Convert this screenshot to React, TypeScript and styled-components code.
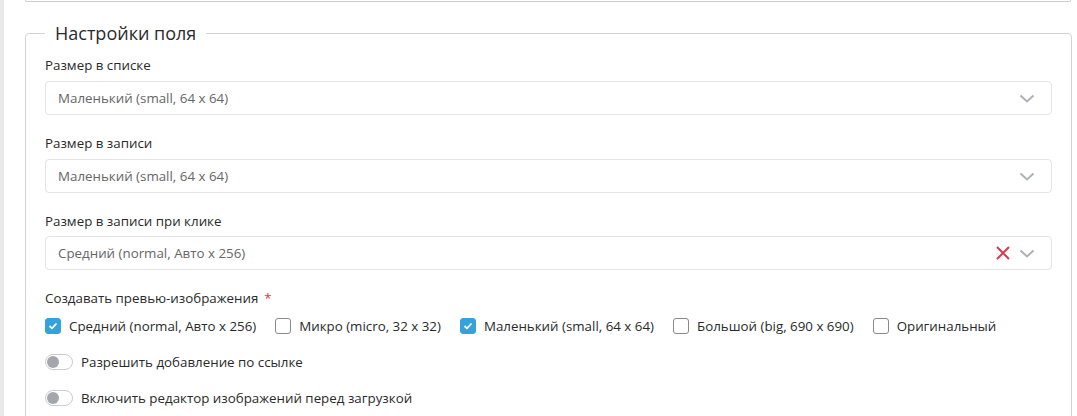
import React from "react";
import styled, { createGlobalStyle } from "styled-components";

const Global = createGlobalStyle`
  html, body { margin: 0; padding: 0; background: #fff; }
  body { font-family: "Open Sans", "Noto Sans", sans-serif; color: #212529; }
  * { box-sizing: border-box; }
`;

const Page = styled.div`
  display: flex;
  min-height: 416px;
  width: 1077px;
  overflow: hidden;
`;

const Strip = styled.div`
  width: 4px;
  flex: none;
  background: #e9e9e9;
`;

const Main = styled.div`
  flex: 1;
  padding: 0 5px 0 21px;
  display: flex;
  flex-direction: column;
`;

const TopCard = styled.div`
  height: 2px;
  margin-right: 1px;
  border: 1px solid #cfcfcf;
  border-top: none;
  border-radius: 0 0 4px 4px;
`;

const Fieldset = styled.fieldset`
  margin: 18px 0 0 0;
  padding: 0 19px 20px 19px;
  border: 1px solid #d4d4d4;
  border-radius: 4px;
  min-width: 0;
`;

const Legend = styled.legend`
  font-size: 18px;
  line-height: 26px;
  padding: 0 10px;
  color: #2b2b2b;
  font-weight: 400;
`;

const Group = styled.div<{ $mt?: number }>`
  margin-top: ${(p) => p.$mt ?? 18}px;
  display: flex;
  flex-direction: column;
`;

const Label = styled.div<{ $mb?: number }>`
  font-size: 13.33px;
  line-height: 20px;
  color: #2a2a2a;
  margin-bottom: ${(p) => p.$mb ?? 6}px;
`;

const Req = styled.span`
  color: #dc3545;
  margin-left: 6px;
`;

const Select = styled.div`
  height: 34px;
  border: 1px solid #e4e4e4;
  border-radius: 4px;
  display: flex;
  align-items: center;
  padding: 0 16px 0 12px;
  font-size: 13.33px;
  color: #666;
`;

const Value = styled.span`
  flex: 1;
`;

const Icons = styled.div`
  display: flex;
  align-items: center;
  gap: 9px;
`;

const CheckRow = styled.div`
  display: flex;
  align-items: center;
  gap: 19px;
  margin-top: 9px;
`;

const CheckItem = styled.label`
  display: flex;
  align-items: center;
  gap: 8px;
  font-size: 13.33px;
  line-height: 18px;
  color: #2a2a2a;
`;

const Box = styled.span<{ $on?: boolean }>`
  width: 16px;
  height: 16px;
  border-radius: 3px;
  display: inline-flex;
  align-items: center;
  justify-content: center;
  background: ${(p) => (p.$on ? "#35a2dc" : "#fff")};
  border: 1px solid ${(p) => (p.$on ? "#35a2dc" : "#8a8a8a")};
`;

const ToggleRow = styled.label`
  display: flex;
  align-items: center;
  gap: 8px;
  font-size: 13.33px;
  line-height: 18px;
  color: #2a2a2a;
  margin-top: 18px;
`;

const Toggle = styled.span`
  width: 28px;
  height: 16px;
  border: 1px solid #c9ccd0;
  border-radius: 8px;
  display: inline-flex;
  align-items: center;
  padding: 1px;
  background: #fff;
`;

const Knob = styled.span`
  width: 12px;
  height: 12px;
  border-radius: 50%;
  background: #a3a7ad;
`;

const Chevron = () => (
  <svg width="16" height="9" viewBox="0 0 16 9">
    <path d="M1.5 1.5 L8 7.5 L14.5 1.5" fill="none" stroke="#adb2b8" strokeWidth="2" />
  </svg>
);

const Cross = () => (
  <svg width="14" height="14" viewBox="0 0 14 14">
    <path d="M1 1 L13 13 M13 1 L1 13" fill="none" stroke="#d9394a" strokeWidth="2" />
  </svg>
);

const Tick = () => (
  <svg width="10" height="8" viewBox="0 0 10 8">
    <path d="M1.5 4 L4 6.3 L8.5 1.5" fill="none" stroke="#fff" strokeWidth="1.8" />
  </svg>
);

const checks = [
  { label: "Средний (normal, Авто x 256)", on: true },
  { label: "Микро (micro, 32 x 32)", on: false },
  { label: "Маленький (small, 64 x 64)", on: true },
  { label: "Большой (big, 690 x 690)", on: false },
  { label: "Оригинальный", on: false },
];

export default function App() {
  return (
    <Page>
      <Global />
      <Strip />
      <Main>
        <TopCard />
        <Fieldset>
          <Legend>Настройки поля</Legend>
          <Group $mt={9}>
            <Label>Размер в списке</Label>
            <Select>
              <Value>Маленький (small, 64 x 64)</Value>
              <Icons>
                <Chevron />
              </Icons>
            </Select>
          </Group>
          <Group>
            <Label>Размер в записи</Label>
            <Select>
              <Value>Маленький (small, 64 x 64)</Value>
              <Icons>
                <Chevron />
              </Icons>
            </Select>
          </Group>
          <Group>
            <Label $mb={5}>Размер в записи при клике</Label>
            <Select>
              <Value>Средний (normal, Авто x 256)</Value>
              <Icons>
                <Cross />
                <Chevron />
              </Icons>
            </Select>
          </Group>
          <Group>
            <Label $mb={0}>
              Создавать превью-изображения<Req>*</Req>
            </Label>
            <CheckRow>
              {checks.map((c) => (
                <CheckItem key={c.label}>
                  <Box $on={c.on}>{c.on && <Tick />}</Box>
                  {c.label}
                </CheckItem>
              ))}
            </CheckRow>
            <ToggleRow>
              <Toggle>
                <Knob />
              </Toggle>
              Разрешить добавление по ссылке
            </ToggleRow>
            <ToggleRow>
              <Toggle>
                <Knob />
              </Toggle>
              Включить редактор изображений перед загрузкой
            </ToggleRow>
          </Group>
        </Fieldset>
      </Main>
    </Page>
  );
}
